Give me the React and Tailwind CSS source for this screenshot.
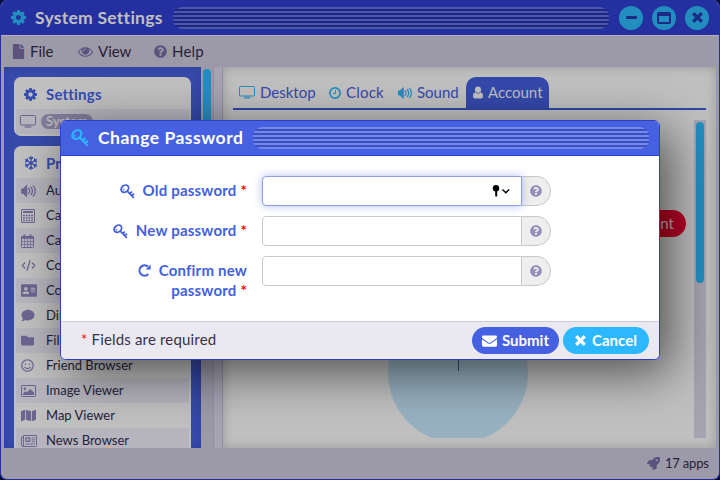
import React from "react";
import {
  FaFile, FaQuestionCircle, FaRegSnowflake, FaAddressCard, FaComment, FaFolder,
  FaRegSmile, FaMap, FaRocket,
} from "react-icons/fa";
import { ImVolumeHigh } from "react-icons/im";
import { CodeXml } from "lucide-react";

function Cog({ className }) {
  return (
    <svg viewBox="128 128 1536 1536" fill="currentColor" className={className}>
      <path d="M1152 896q0-106-75-181t-181-75-181 75-75 181 75 181 181 75 181-75 75-181zm512-109v222q0 12-8 23t-20 13l-185 28q-19 54-39 91 35 50 107 138 10 12 10 25t-9 23q-27 37-99 108t-94 71q-12 0-26-9l-138-108q-44 23-91 38-16 136-29 186-7 28-36 28h-222q-14 0-24.500-8.500t-11.500-21.500l-28-184q-49-16-90-37l-141 107q-10 9-25 9-14 0-25-11-126-114-165-168-7-10-7-23 0-12 8-23 15-21 51-66.500t54-70.500q-27-50-41-99l-183-27q-13-2-21-12.500t-8-23.500v-222q0-12 8-23t19-13l186-28q14-46 39-92-40-57-107-138-10-12-10-24 0-10 9-23 26-36 98.500-107.500t94.500-71.500q13 0 26 10l138 107q44-23 91-38 16-136 29-186 7-28 36-28h222q14 0 24.500 8.500t11.500 21.500l28 184q49 16 90 37l142-107q9-9 24-9 13 0 25 10 129 119 165 170 7 8 7 22 0 12-8 23-15 21-51 66.500t-54 70.500q26 50 41 98l183 28q13 2 21 12.500t8 23.500z" />
    </svg>
  );
}

function Eye({ className }) {
  return (
    <svg viewBox="0 0 1792 1792" fill="currentColor" className={className}>
      <path d="M1664 960q-152-236-381-353 61 104 61 225 0 185-131.500 316.500t-316.500 131.500-316.500-131.500-131.500-316.500q0-121 61-225-229 117-381 353 133 205 333.500 326.500t434.500 121.500 434.500-121.500 333.500-326.500zm-720-384q0-20-14-34t-34-14q-125 0-214.500 89.500t-89.500 214.500q0 20 14 34t34 14 34-14 14-34q0-86 61-147t147-61q20 0 34-14t14-34zm848 384q0 34-20 69-140 230-376.500 368.500t-499.500 138.500-499.500-139-376.500-368q-20-35-20-69t20-69q140-229 376.500-368t499.500-139 499.500 139 376.500 368q20 35 20 69z" />
    </svg>
  );
}

function Monitor({ className }) {
  return (
    <svg viewBox="0 0 16 13" fill="none" stroke="currentColor" className={className}>
      <rect x="0.500" y="0.500" width="15" height="9.500" rx="0.800" />
      <path d="M7 10v1.500M9 10v1.500M4.500 12h7" />
    </svg>
  );
}

function Clock({ className }) {
  return (
    <svg viewBox="0 0 12 12" fill="none" stroke="currentColor" className={className}>
      <circle cx="6" cy="6" r="5.100" strokeWidth="1.700" />
      <path d="M6.500 3v3.500H4" strokeWidth="1" />
    </svg>
  );
}

function User({ className }) {
  return (
    <svg viewBox="0 0 10 13" fill="currentColor" className={className}>
      <path d="M5 0.500a3 3 0 0 1 3 3a3.200 3.200 0 0 1-3 3.400a3.200 3.200 0 0 1-3-3.400a3 3 0 0 1 3-3zM2.300 6.200Q3.500 7.600 5 7.600T7.700 6.200Q10 6.700 10 10.500Q10 12.500 8.200 12.500H1.800Q0 12.500 0 10.500Q0 6.700 2.300 6.200z" />
    </svg>
  );
}

function Key({ className }) {
  return (
    <svg viewBox="0 0 18 18" fill="none" stroke="currentColor" className={className}>
      <ellipse cx="5.800" cy="5.600" rx="4.900" ry="3.900" transform="rotate(-42 5.800 5.600)" strokeWidth="2.100" />
      <path d="M8.500 8.200L16.600 16.600M11.800 11.400l2.500-2.300M14.300 13.900l2.500-2.300" strokeWidth="2.100" />
      <circle cx="4.200" cy="6.800" r="0.800" strokeWidth="0.800" />
    </svg>
  );
}

function Times({ className }) {
  return (
    <svg viewBox="0 0 12 12" fill="none" stroke="currentColor" strokeWidth="3.600" strokeLinecap="square" className={className}>
      <path d="M2.600 2.600l6.800 6.800M9.400 2.600l-6.800 6.800" />
    </svg>
  );
}

function Refresh({ className }) {
  return (
    <svg viewBox="0 0 13 13" className={className}>
      <path d="M10.300 10a5.100 5.100 0 1 1-.3-7.300" fill="none" stroke="currentColor" strokeWidth="2.100" />
      <path d="M12.600 0.500v5H7.600z" fill="currentColor" />
    </svg>
  );
}

function Envelope({ className }) {
  return (
    <svg viewBox="0 0 16 12" fill="currentColor" className={className}>
      <path d="M1.400 0h13.200Q16 0 16 1.400Q16 2.700 14.700 3.700L9.600 7.200Q8 8.300 6.400 7.200L1.300 3.700Q0 2.700 0 1.400Q0 0 1.400 0zM0 4.200L6 8.300Q8 9.500 10 8.300L16 4.200V10.600Q16 12 14.600 12H1.400Q0 12 0 10.600z" />
    </svg>
  );
}

function Calculator({ className }) {
  return (
    <svg viewBox="0 0 14 14" fill="none" stroke="currentColor" className={className}>
      <rect x="0.500" y="0.500" width="13" height="13" rx="0.500" />
      <path d="M2 3h10" strokeWidth="2" />
      <path d="M2 6.500h10M2 9h10M2 11.500h10" strokeWidth="1.700" strokeDasharray="1.900 0.800" />
    </svg>
  );
}

function Calendar({ className }) {
  return (
    <svg viewBox="0 0 13 14" fill="none" stroke="currentColor" className={className}>
      <rect x="0.500" y="2.500" width="12" height="11" rx="0.800" />
      <path d="M0.500 3.500h12" strokeWidth="2.500" />
      <path d="M3.500 0.500v3M9.500 0.500v3" strokeWidth="2" />
      <path d="M3.500 4v9M6.500 4v9M9.500 4v9M1 7.500h11M1 10.500h11" strokeWidth="0.700" />
    </svg>
  );
}

function Picture({ className }) {
  return (
    <svg viewBox="0 0 15 12" className={className}>
      <rect x="0.500" y="0.500" width="14" height="11" rx="0.600" fill="none" stroke="currentColor" />
      <circle cx="3.800" cy="3.700" r="1.300" fill="currentColor" />
      <path d="M2 10V8.500L4.300 6.300L6 7.500L9 4L13 7.500V10z" fill="currentColor" />
    </svg>
  );
}

function Newspaper({ className }) {
  return (
    <svg viewBox="0 0 16 12" fill="none" stroke="currentColor" className={className}>
      <path d="M2.500 0.500h13v10q0 1-1 1h-12.500q-1.500 0-1.500-1.300V2h2M2.500 0.500v9.500q0 1-.8 1.400" />
      <rect x="5" y="3" width="3.600" height="3.300" strokeWidth="1.300" />
      <path d="M10.500 3h3.500M10.500 4.900h3.500M10.500 6.800h3.500M4.400 9h9.600" strokeWidth="0.900" />
    </svg>
  );
}

function Stripes({ light, dark }) {
  return (
    <div className={`h-[22px] flex-1 overflow-hidden rounded-[9px] ${dark}`}>
      {[0, 1, 2, 3, 4, 5].map((i) => (
        <div key={i} className={`mb-[2px] h-[2px] ${light}`} />
      ))}
    </div>
  );
}

const programs = [
  ["Audio Player", <ImVolumeHigh className="h-[14px] w-[15px]" />],
  ["Calculator", <Calculator className="h-[14px] w-[14px]" />],
  ["Calendar", <Calendar className="h-[14px] w-[13px]" />],
  ["Code Editor", <CodeXml className="h-[15px] w-[15px]" strokeWidth={2} />],
  ["Contacts", <FaAddressCard className="h-[15px] w-[16px]" />],
  ["Dimension", <FaComment className="h-[13px] w-[14px]" />],
  ["File Browser", <FaFolder className="h-[13px] w-[13px]" />],
  ["Friend Browser", <FaRegSmile className="h-[13px] w-[13px]" />],
  ["Image Viewer", <Picture className="h-[12px] w-[15px]" />],
  ["Map Viewer", <FaMap className="h-[15px] w-[15px]" />],
  ["News Browser", <Newspaper className="h-[12px] w-[16px]" />],
];

function Field({ icon, label, focused, wrapped }) {
  return (
    <div className="flex h-[30px] items-start">
      <div className="flex w-[186px] justify-end pt-[4px] text-[15px] leading-5 font-bold text-[#445fe0]">
        <span className="mr-[8px] pt-[4px]">{icon}</span>
        <span className="text-right tracking-[0.2px] whitespace-nowrap">
          {wrapped ? <>Confirm new<br />password</> : label} <span className="text-[#ff0000]">*</span>
        </span>
      </div>
      <div className="ml-[15px] flex h-[30px]">
        <div className={`flex h-[30px] w-[260px] items-center justify-end rounded-l-[4px] border bg-white pr-[11px] ${focused ? "z-10 border-[#8d9de8] shadow-[0_0_9px_rgba(68,95,224,0.4)]" : "border-[#c9c9c9]"}`}>
          {focused && (
            <svg viewBox="0 0 18 12" className="h-[12px] w-[18px]">
              <circle cx="4" cy="3.300" r="3.200" fill="#000" />
              <path d="M3.200 5h2v5.500L4.200 12l-1-1z" fill="#000" />
              <path d="M10.500 4.500l3.300 3.300 3.300-3.300" fill="none" stroke="#000" strokeWidth="1.400" />
            </svg>
          )}
        </div>
        <div className="flex w-[29px] items-center justify-center rounded-r-full border border-l-0 border-[#c9c9c9] bg-[#eeeeee] text-[#968dbb]">
          <FaQuestionCircle className="h-3 w-3" />
        </div>
      </div>
    </div>
  );
}

function Tab({ icon, label, className }) {
  return (
    <div className={`flex h-[31px] items-center gap-[5px] ${className}`}>
      {icon}
      <span>{label}</span>
    </div>
  );
}

export default function App() {
  return (
    <div className="relative h-[480px] w-[720px] overflow-hidden bg-[#050b3a] font-['Lato','Liberation_Sans',sans-serif] text-[#25213a]">
      <div className="flex h-[480px] w-[720px] flex-col overflow-hidden rounded-[7px] border border-t-0 border-[#24309f] bg-[#9c9aa9]">
        <header className="flex h-[35px] shrink-0 items-center bg-[#24309f] pr-[10px] pl-[10px]">
          <Cog className="h-[15px] w-[15px] text-[#228ec0]" />
          <h1 className="ml-[9px] w-[127px] pt-[2px] text-[17.500px] font-bold tracking-[0.27px] whitespace-nowrap text-[#c0c0c0]">System Settings</h1>
          <div className="ml-[11px] flex w-[436px]"><Stripes light="bg-[#4c57ac]" dark="bg-[#1e2780]" /></div>
          <div className="ml-[10px] flex gap-[9px] text-[#1d2a83]">
            <div className="flex h-6 w-6 items-center justify-center rounded-full bg-[#228ec0]"><div className="h-[3px] w-[11px] rounded-[1px] bg-[#1d2a83]" /></div>
            <div className="flex h-6 w-6 items-center justify-center rounded-full bg-[#228ec0]"><div className="h-3 w-[14px] rounded-[2px] border-2 border-t-4 border-[#1d2a83]" /></div>
            <div className="flex h-6 w-6 items-center justify-center rounded-full bg-[#228ec0]"><Times className="h-[11px] w-[11px]" /></div>
          </div>
        </header>

        <nav className="flex h-8 shrink-0 items-center border-t border-[#b3b2c4] pl-[11px] text-[15px]">
          <FaFile className="h-[15px] w-[13px] text-[#5b527d]" />
          <span className="ml-[5px] w-[24px]">File</span>
          <Eye className="ml-[24px] h-[15px] w-[15px] text-[#5b527d]" />
          <span className="ml-[5px] w-[33px]">View</span>
          <FaQuestionCircle className="ml-[23px] h-[13px] w-[13px] text-[#5b527d]" />
          <span className="ml-[5px] tracking-[0.2px]">Help</span>
        </nav>

        <main className="flex h-[381px] shrink-0 pr-[3px] pl-[3px]">
          <aside className="flex h-[381px] w-[197px] shrink-0 flex-col gap-[10px] overflow-hidden bg-[#364bab] pt-[10px] pl-[10px] shadow-[inset_0_0_10px_rgba(20,30,100,0.25)]">
            <section className="h-[59px] w-[177px] shrink-0 rounded-[7px] bg-[#c0c0c0] px-[2px]">
              <h2 className="flex h-8 items-center pt-[2px] pl-2 text-[15px] font-bold tracking-[0.2px] text-[#364bb0]">
                <Cog className="mr-[9px] h-[13px] w-[13px]" />Settings
              </h2>
              <div className="flex h-[25px] items-center bg-[#b6b5bd] pl-[4px] text-[13px]">
                <Monitor className="h-[13px] w-[16px] text-[#6c6591]" />
                <span className="ml-[5px] flex h-[15px] items-center rounded-full bg-[#827d9b] px-[5px] font-bold text-[#b9b9c0]">System</span>
              </div>
            </section>
            <section className="w-[177px] shrink-0 rounded-t-[7px] bg-[#c0c0c0] px-[2px]">
              <h2 className="flex h-8 items-center pt-[2px] pl-2 text-[15px] font-bold text-[#364bb0]">
                <FaRegSnowflake className="mr-[8px] h-[14px] w-[14px]" />Programs
              </h2>
              {programs.map(([name, icon], i) => (
                <div key={name} className={`flex h-[25px] items-center text-[13px] ${i % 2 ? "" : "bg-[#b6b5bd]"}`}>
                  <span className="flex w-[30px] pl-[5px] text-[#6c6591]">{icon}</span>
                  <span>{name}</span>
                </div>
              ))}
            </section>
          </aside>
          <div className="flex w-3 shrink-0 justify-center bg-[#9c9aa9] pt-[2px]">
            <div className="h-[160px] w-2 rounded-full bg-[#228ec0]" />
          </div>
          <div className="w-[10px] shrink-0 border-x border-[#928fa3] bg-[#a6a3b3]" />

          <section className="h-[381px] flex-1 bg-[#c0c0c0] px-[10px] pt-[10px] shadow-[inset_0_0_12px_rgba(0,0,0,0.2)]">
            <div className="flex h-[33px] border-b-2 border-[#3047a9] text-[15px] text-[#3547ab]">
              <Tab className="w-[96px] pl-[6px]" label="Desktop" icon={<Monitor className="h-[13px] w-[16px] text-[#228ec0]" />} />
              <Tab className="w-[69px] tracking-[0.2px]" label="Clock" icon={<Clock className="h-3 w-3 text-[#228ec0]" />} />
              <Tab className="w-[68px]" label="Sound" icon={<ImVolumeHigh className="h-[14px] w-[14px] text-[#228ec0]" />} />
              <Tab className="w-[83px] rounded-t-[10px] bg-[#3449aa] pl-[7px] text-[#c0c0c0]" label="Account" icon={<User className="h-[13px] w-[10px]" />} />
            </div>
            <div className="mt-[10px] flex h-[318px] overflow-hidden">
              <div className="flex w-[461px] flex-col pt-[90px] pr-2">
                <div className="flex h-[27px] w-[130px] shrink-0 items-center justify-end self-end rounded-full bg-[#bd0224] pr-3 text-[15px] text-[#c0c0c0]">Delete Account</div>
                <svg viewBox="0 0 140 140" className="mt-[66px] ml-[155px] h-[140px] w-[140px] shrink-0">
                  <circle cx="70" cy="70" r="70" fill="#98b1c0" />
                  <path d="M70.500 0v68" stroke="#2b527b" strokeWidth="1" />
                </svg>
              </div>
              <div className="flex w-3 justify-center bg-[#a5a3b0] pt-[2px]">
                <div className="h-[161px] w-2 rounded-full bg-[#228ec0]" />
              </div>
            </div>
          </section>
        </main>

        <footer className="flex h-[31px] shrink-0 items-center justify-end gap-[5px] pr-[11px] text-[13px]">
          <FaRocket className="h-[13px] w-[13px] text-[#5b527d]" /><span className="w-[43px] whitespace-nowrap tracking-[-0.2px]">17 apps</span>
        </footer>
      </div>

      <div role="dialog" className="absolute top-[120px] left-[60px] flex h-[240px] w-[600px] flex-col overflow-hidden rounded-[6px] border border-[#2e3fc4] bg-white shadow-[10px_12px_50px_rgba(0,0,0,0.6)]">
        <header className="flex h-[35px] shrink-0 items-center border-b border-[#2e3fc4] bg-[#4561e2] pr-[10px] pl-[10px]">
          <Key className="h-[18px] w-[18px] text-[#2db7ff]" />
          <h2 className="ml-[9px] w-[145px] pt-[1px] text-[17.500px] font-bold tracking-[0.5px] whitespace-nowrap text-white">Change Password</h2>
          <div className="ml-[10px] flex flex-1"><Stripes light="bg-[#7589eb]" dark="bg-[#3b4fc1]" /></div>
        </header>
        <div className="flex flex-1 flex-col gap-[10px] pt-5">
          <Field focused label="Old password" icon={<Key className="h-[15px] w-[15px]" />} />
          <Field label="New password" icon={<Key className="h-[15px] w-[15px]" />} />
          <Field wrapped icon={<Refresh className="h-[13px] w-[13px]" />} />
        </div>
        <footer className="flex h-[38px] shrink-0 items-center border-t border-[#cbc9da] bg-[#eae9ef] pr-[10px] pl-5 text-[15px]">
          <span className="mr-auto flex gap-[4px] pb-[3px] tracking-[0.17px] text-[#36324c]"><span className="text-[#ff0000]">*</span><span>Fields are required</span></span>
          <button className="flex h-[27px] w-[87px] items-center justify-center gap-[5px] rounded-full bg-[#4561e2] font-bold text-white"><Envelope className="h-3 w-[15px]" />Submit</button>
          <button className="ml-1 flex h-[27px] w-[86px] items-center justify-center gap-[6px] rounded-full bg-[#2db7ff] font-bold text-white"><Times className="h-[11px] w-[11px]" />Cancel</button>
        </footer>
      </div>
    </div>
  );
}
